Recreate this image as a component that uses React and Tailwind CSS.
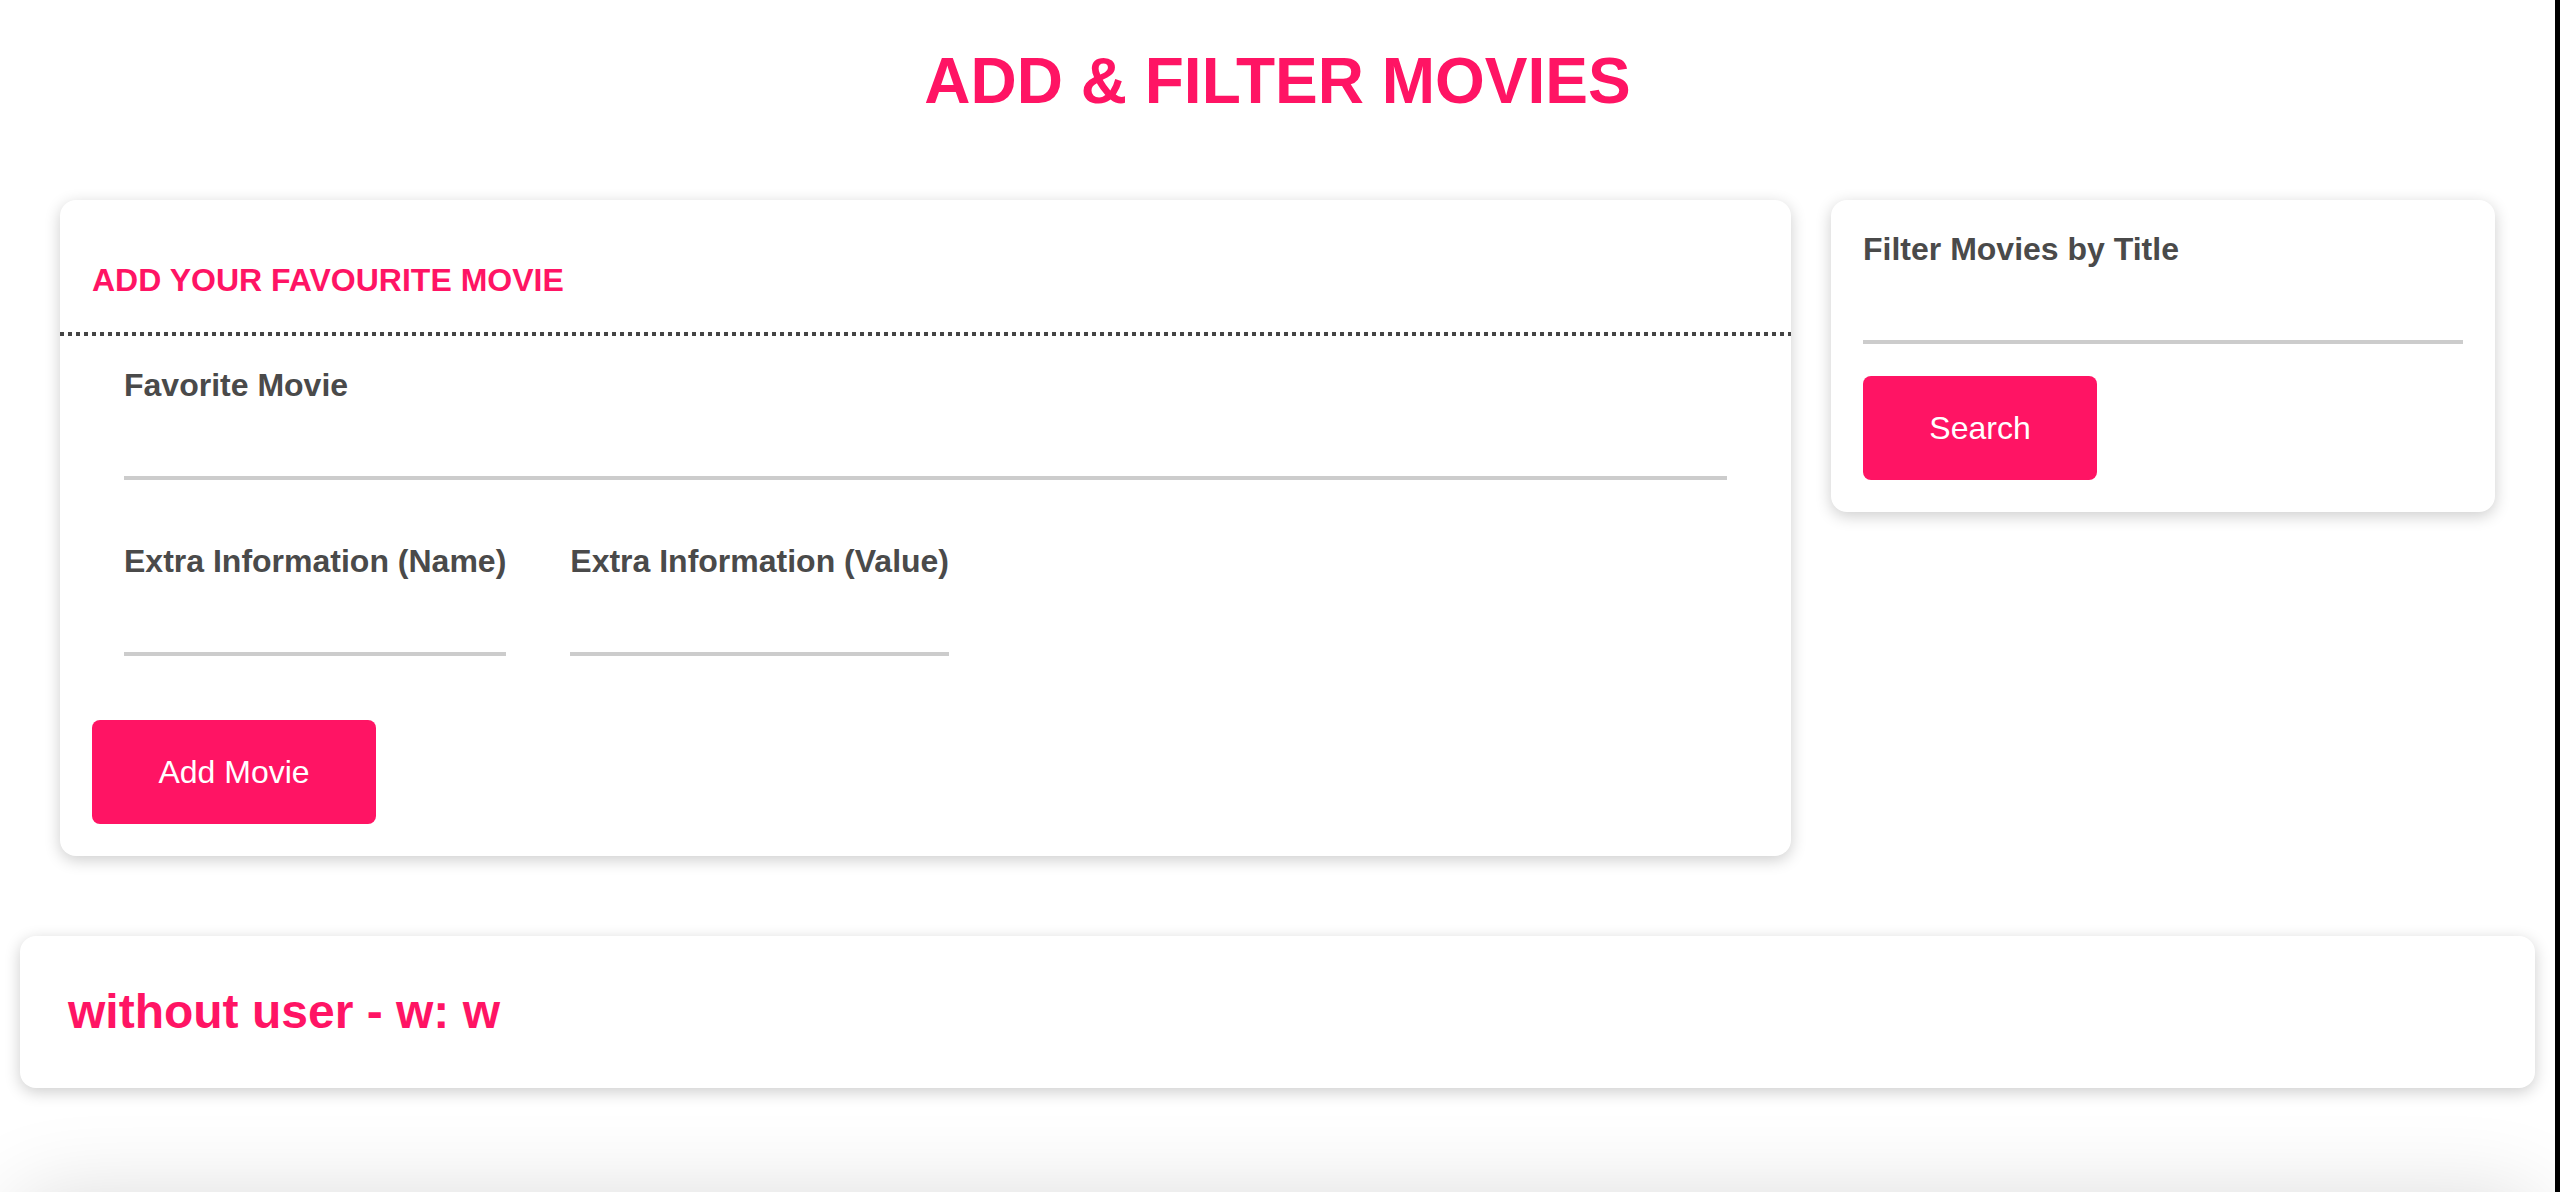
import React from "react";

function Field({ label, className = "" }) {
  return (
    <div className={className}>
      <label className="block text-[32px] leading-[37px] font-bold text-[#4a4a4a] whitespace-nowrap">
        {label}
      </label>
      <input
        type="text"
        size={1}
        className="block w-full min-w-0 h-[76px] bg-transparent border-0 border-b-[4px] border-solid border-[#cccccc] outline-none text-[32px] text-[#4a4a4a]"
      />
    </div>
  );
}

export default function App() {
  return (
    <div className="min-h-screen bg-white border-r-[5px] border-black font-['Liberation_Sans',Arial,Helvetica,sans-serif] overflow-hidden">
      <h1 className="pt-[44px] text-center text-[64px] leading-[74px] font-bold text-[#ff1464]">
        ADD &amp; FILTER MOVIES
      </h1>

      <div className="mt-[82px] flex items-start gap-[40px] px-[60px]">
        <div className="flex-1 rounded-[16px] bg-white shadow-[0_4px_16px_rgba(0,0,0,0.2)]">
          <div className="px-[32px] pt-[62px] pb-[33px]">
            <h2 className="text-[32px] leading-[37px] font-bold text-[#ff1464]">
              ADD YOUR FAVOURITE MOVIE
            </h2>
          </div>
          <div className="h-[4px] bg-[repeating-linear-gradient(90deg,#444444_0px,#444444_4px,transparent_4px,transparent_8px)]" />
          <div className="px-[64px] pt-[31px]">
            <Field label="Favorite Movie" />
            <div className="mt-[63px] flex gap-[64px]">
              <Field label="Extra Information (Name)" />
              <Field label="Extra Information (Value)" />
            </div>
          </div>
          <div className="px-[32px] pt-[64px] pb-[32px]">
            <button className="w-[284px] h-[104px] rounded-[8px] bg-[#ff1464] text-white text-[32px] leading-[37px]">
              Add Movie
            </button>
          </div>
        </div>

        <div className="w-[664px] rounded-[16px] bg-white shadow-[0_4px_16px_rgba(0,0,0,0.2)] px-[32px] pt-[31px] pb-[32px]">
          <Field label="Filter Movies by Title" />
          <button className="mt-[32px] w-[234px] h-[104px] rounded-[8px] bg-[#ff1464] text-white text-[32px] leading-[37px]">
            Search
          </button>
        </div>
      </div>

      <div className="mt-[80px] mx-[20px] rounded-[16px] bg-white shadow-[0_4px_16px_rgba(0,0,0,0.2)] px-[48px] py-[48px]">
        <h3 className="text-[48px] leading-[56px] font-bold text-[#ff1464]">
          without user - w: w
        </h3>
      </div>

      <div className="mt-[112px] mx-[20px] h-[300px] rounded-[16px] bg-white shadow-[0_0_90px_rgba(0,0,0,0.16)]" />
    </div>
  );
}
